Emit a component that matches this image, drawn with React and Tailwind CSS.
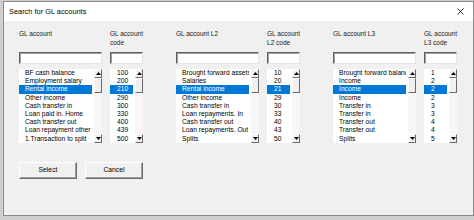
import React from "react";

const lists = [
  {
    label: ["GL account"],
    names: ["BF cash balance", "Employment salary", "Rental income", "Other income", "Cash transfer in", "Loan paid in. Home", "Cash transfer out", "Loan repayment other", "1.Transaction to split"],
    codeLabel: ["GL account", "code"],
    codes: ["100", "200", "210", "290", "300", "330", "400", "439", "500"],
  },
  {
    label: ["GL account L2"],
    names: ["Brought forward assets", "Salaries", "Rental income", "Other income", "Cash transfer in", "Loan repayments. In", "Cash transfer out", "Loan repayments. Out", "Splits"],
    codeLabel: ["GL account", "L2 code"],
    codes: ["10", "20", "21", "29", "30", "33", "40", "43", "50"],
  },
  {
    label: ["GL account L3"],
    names: ["Brought forward balance", "Income", "Income", "Income", "Transfer in", "Transfer in", "Transfer out", "Transfer out", "Splits"],
    codeLabel: ["GL account", "L3 code"],
    codes: ["1", "2", "2", "2", "3", "3", "4", "4", "5"],
  },
];

function Arrow({ up }) {
  return (
    <svg width="5" height="3" viewBox="0 0 5 3" className="block">
      {up ? <polygon points="0,3 5,3 2.5,0" fill="#000" /> : <polygon points="0,0 5,0 2.5,3" fill="#000" />}
    </svg>
  );
}

function ScrollBtn({ up }) {
  return (
    <div className="h-[9px] flex items-center justify-center bg-[#f0f0f0] border-t border-l border-t-white border-l-white border-b border-r border-b-[#6b6b6b] border-r-[#6b6b6b]">
      <Arrow up={up} />
    </div>
  );
}

function Scrollbar() {
  return (
    <div className="w-[8px] shrink-0 flex flex-col bg-[#f7f7f7]">
      <ScrollBtn up />
      <div className="h-[15px] bg-[#f0f0f0] border-t border-l border-t-white border-l-white border-b border-r border-b-[#6b6b6b] border-r-[#6b6b6b]" />
      <div className="flex-1" />
      <ScrollBtn />
    </div>
  );
}

function ListBox({ items, width, pl }) {
  return (
    <div className={`${width} h-[74px] bg-white flex`}>
      <div className="flex-1 min-w-0 pr-[2px] overflow-hidden">
        {items.map((t, i) => (
          <div
            key={i}
            className={`h-[8.2px] leading-[8.2px] whitespace-nowrap overflow-hidden ${pl} ${i === 2 ? "bg-[#0078d7] text-white" : "text-black"}`}
          >
            {t}
          </div>
        ))}
      </div>
      <Scrollbar />
    </div>
  );
}

function Label({ lines }) {
  return (
    <div className="h-[22px] text-[6.5px] leading-[8.5px] text-[#1a1a1a]">
      {lines.map((l, i) => (
        <div key={i} className="whitespace-nowrap">{l}</div>
      ))}
    </div>
  );
}

function TextBox({ width }) {
  return <div className={`${width} h-[12px] bg-white border-t border-l border-t-[#5f5f5f] border-l-[#5f5f5f] border-b border-r border-b-[#e4e4e4] border-r-[#e4e4e4] shadow-[inset_1px_1px_0_#a0a0a0]`} />;
}

function Column({ label, items, width, pl }) {
  return (
    <div className="flex flex-col">
      <Label lines={label} />
      <TextBox width={width} />
      <div className="h-[5px]" />
      <ListBox items={items} width={width} pl={pl} />
    </div>
  );
}

function Button({ children }) {
  return (
    <div className="w-[58px] h-[17px] flex items-center justify-center text-[6.8px] bg-[#f0f0f0] border-t border-l border-t-white border-l-white border-b border-r border-b-[#696969] border-r-[#696969] shadow-[inset_-1px_-1px_0_#a0a0a0]">
      {children}
    </div>
  );
}

export default function App() {
  return (
    <div className="w-[474px] h-[220px] bg-[#cfcfcf] overflow-hidden font-['Liberation_Sans',Arial,sans-serif] pt-[1px]">
      <div className="ml-[3px] w-[471px] h-[215px] border border-[#8a8a8a] bg-[#f0f0f0] flex flex-col">
        <div className="h-[19px] bg-white flex items-center justify-between pl-[5px] pr-[9px]">
          <span className="text-[7.4px] text-black">Search for GL accounts</span>
          <svg width="7" height="7" viewBox="0 0 7 7">
            <path d="M0.5 0.5 L6.5 6.5 M6.5 0.5 L0.5 6.5" stroke="#222" strokeWidth="0.9" />
          </svg>
        </div>
        <div className="pl-[15px] pt-[9px] flex flex-col">
          <div className="flex gap-[33px] text-[6.7px]">
            {lists.map((g, i) => (
              <div key={i} className="flex gap-[8px]">
                <Column label={g.label} items={g.names} width="w-[83px]" pl="pl-[6px]" />
                <Column label={g.codeLabel} items={g.codes} width="w-[33px]" pl="pl-[7px]" />
              </div>
            ))}
          </div>
          <div className="mt-[19px] flex gap-[8px]">
            <Button>Select</Button>
            <Button>Cancel</Button>
          </div>
        </div>
      </div>
    </div>
  );
}
